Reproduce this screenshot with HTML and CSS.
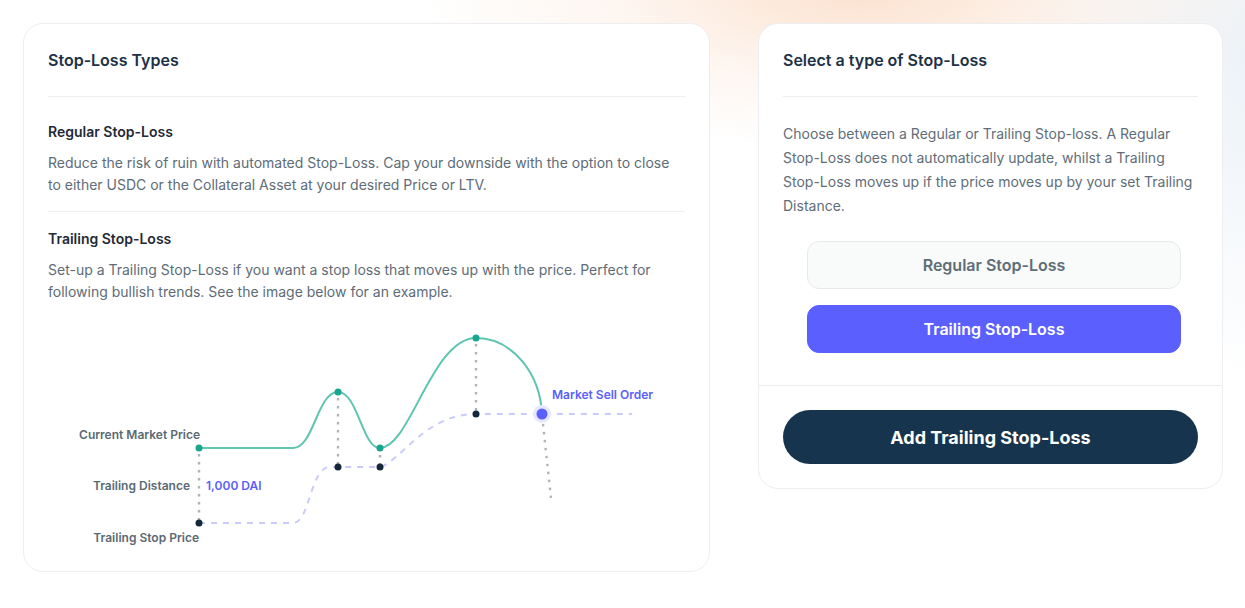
FILE: index.html
```html
<!DOCTYPE html>
<html lang="en">
<head>
<meta charset="utf-8">
<title>Stop-Loss</title>
<link rel="stylesheet" href="styles.css">
</head>
<body>
<main class="layout">
  <section class="card info-card">
    <h2 class="card-title">Stop-Loss Types</h2>
    <hr class="rule">
    <div class="type type-first">
      <h3 class="type-title">Regular Stop-Loss</h3>
      <p class="type-text">Reduce the risk of ruin with automated Stop-Loss. Cap your downside with the option to close to either USDC or the Collateral Asset at your desired Price or LTV.</p>
    </div>
    <hr class="rule rule-mid">
    <div class="type">
      <h3 class="type-title">Trailing Stop-Loss</h3>
      <p class="type-text">Set-up a Trailing Stop-Loss if you want a stop loss that moves up with the price. Perfect for following bullish trends. See the image below for an example.</p>
    </div>
    <svg class="chart" viewBox="48 302 637 244" width="637" height="244" xmlns="http://www.w3.org/2000/svg">
      <g fill="none" stroke="#aeb4ba" stroke-width="2.4" stroke-dasharray="2.4 5.6">
        <path d="M199 453 V519"/>
        <path d="M338 397 V463"/>
        <path d="M380 454 V463"/>
        <path d="M476 343 V410"/>
        <path d="M543 423 L551 497"/>
      </g>
      <path d="M199 522 H293 C310 522, 310 466, 330 466 H380 C400 461, 425 413, 476 413 H632" fill="none" stroke="#c9cbfb" stroke-width="2" stroke-dasharray="6 6"/>
      <path d="M199 447 H293 C314 447, 317 391, 338 391 C358 391, 362 447, 380 447 C410 447, 432 337, 476 337 C512 337, 540 372, 542 413" fill="none" stroke="#5fc4b0" stroke-width="2"/>
      <g fill="#1aa68e">
        <circle cx="199" cy="447" r="3.5"/>
        <circle cx="338" cy="391" r="3.5"/>
        <circle cx="380" cy="447" r="3.5"/>
        <circle cx="476" cy="337" r="3.5"/>
      </g>
      <g fill="#15283b">
        <circle cx="199" cy="522" r="3.5"/>
        <circle cx="338" cy="466" r="3.5"/>
        <circle cx="380" cy="466" r="3.5"/>
        <circle cx="476" cy="413" r="3.5"/>
      </g>
      <circle cx="542" cy="413" r="9" fill="#e7e8fe"/>
      <circle cx="542" cy="413" r="5.5" fill="#5a5ffe"/>
      <g class="chart-label">
        <text x="200" y="438" text-anchor="end">Current Market Price</text>
        <text x="190" y="489" text-anchor="end">Trailing Distance</text>
        <text x="199" y="541" text-anchor="end">Trailing Stop Price</text>
      </g>
      <g class="chart-label chart-accent">
        <text x="206" y="489">1,000 DAI</text>
        <text x="552" y="398">Market Sell Order</text>
      </g>
    </svg>
  </section>

  <section class="card action-card">
    <div class="action-top">
      <h2 class="card-title">Select a type of Stop-Loss</h2>
      <hr class="rule">
      <p class="action-text">Choose between a Regular or Trailing Stop-loss. A Regular Stop-Loss does not automatically update, whilst a Trailing Stop-Loss moves up if the price moves up by your set Trailing Distance.</p>
      <div class="choice-list">
        <button class="choice">Regular Stop-Loss</button>
        <button class="choice choice-active">Trailing Stop-Loss</button>
      </div>
    </div>
    <div class="action-bottom">
      <button class="submit">Add Trailing Stop-Loss</button>
    </div>
  </section>
</main>
</body>
</html>
```

FILE: styles.css
```css
* { box-sizing: border-box; }

html, body {
  margin: 0;
  height: 100%;
}

body {
  font-family: Inter, "Noto Sans", "Liberation Sans", sans-serif;
  background:
    radial-gradient(ellipse 440px 160px at 860px -10px, rgba(251, 220, 198, 0.85), rgba(251, 228, 212, 0.35) 55%, rgba(255, 255, 255, 0) 100%),
    radial-gradient(ellipse 260px 320px at 1260px 60px, rgba(236, 242, 248, 1), rgba(255, 255, 255, 0) 100%),
    #ffffff;
  color: #1e2b3a;
}

.layout {
  display: flex;
  align-items: flex-start;
  gap: 48px;
  padding: 23px 22px 0 23px;
}

.card {
  background: #ffffff;
  border: 1px solid #eceef1;
  border-radius: 20px;
}

.info-card {
  width: 687px;
  padding: 24px;
}

.action-card {
  width: 465px;
}

.card-title {
  margin: 0;
  font-size: 16px;
  line-height: 24px;
  font-weight: 600;
  color: #1c3046;
}

.rule {
  margin: 24px 0 0 0;
  border: 0;
  border-top: 1px solid #eceef0;
  height: 0;
}

.rule-mid { margin-top: 15px; }

.type { margin-top: 17px; }
.type-first { margin-top: 25px; }

.type-title {
  margin: 0;
  font-size: 14px;
  line-height: 20px;
  font-weight: 600;
  color: #1f2a37;
}

.type-text {
  margin: 10px 0 0 0;
  font-size: 14px;
  line-height: 22px;
  color: #5e6c77;
}

.chart {
  display: block;
}

.chart-label {
  font-family: Inter, "Noto Sans", sans-serif;
  font-size: 12px;
  font-weight: 600;
  fill: #5a6a73;
}

.chart-accent { fill: #5a5ffe; }

.action-top {
  padding: 24px 24px 32px 24px;
}

.action-text {
  margin: 25px 0 0 0;
  font-size: 14px;
  line-height: 24px;
  color: #5f6d78;
}

.choice-list {
  display: flex;
  flex-direction: column;
  gap: 16px;
  margin: 23px 17px 0 24px;
}

.choice {
  height: 48px;
  border-radius: 12px;
  border: 1px solid #e7e9eb;
  background: #f9fafa;
  font-family: Inter, "Noto Sans", sans-serif;
  font-size: 16px;
  font-weight: 600;
  color: #5d6e77;
}

.choice-active {
  background: #5a5ffe;
  border-color: #5a5ffe;
  color: #ffffff;
}

.action-bottom {
  border-top: 1px solid #eceef0;
  padding: 24px;
}

.submit {
  display: block;
  width: 100%;
  height: 54px;
  border: 0;
  border-radius: 27px;
  background: #17344e;
  color: #ffffff;
  font-family: Inter, "Noto Sans", sans-serif;
  font-size: 18px;
  font-weight: 700;
}
```
